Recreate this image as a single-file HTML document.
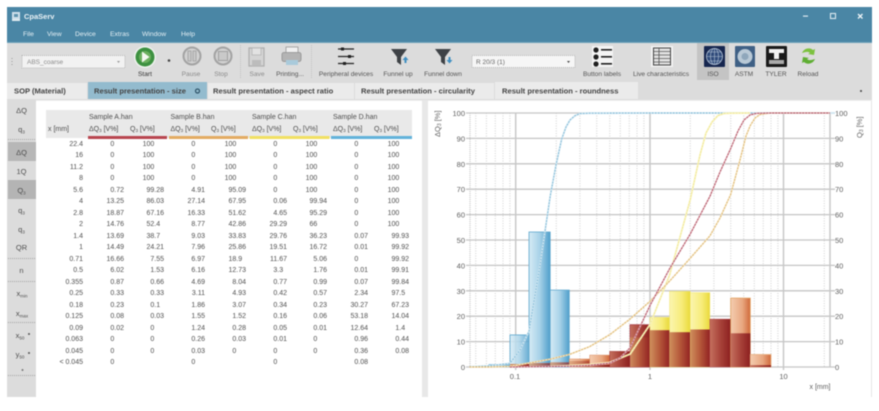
<!DOCTYPE html>
<html><head><meta charset="utf-8"><style>
html,body{margin:0;padding:0;background:#fff;width:879px;height:411px;overflow:hidden}
#w{position:relative;width:879px;height:411px;filter:blur(.55px);font-family:"Liberation Sans",sans-serif}
svg{position:absolute;left:0;top:0}
svg text{font-family:"Liberation Sans","DejaVu Sans",sans-serif}
#t{position:absolute;left:46px;top:138.7px;display:grid;grid-template-columns:37px 41px 40px 41px 41px 41px 40px 41px 41px;grid-auto-rows:11.53px;font-size:7px;line-height:11.53px;color:#4f4f4f;text-align:right}
#t u{visibility:hidden;text-decoration:none}
</style></head><body><div id="w">
<svg width="879" height="411" viewBox="0 0 879 411">
<defs>
<linearGradient id="gb"><stop offset="0" stop-color="#d6ebf5"/><stop offset=".5" stop-color="#a8d2e8"/><stop offset="1" stop-color="#4f9fcb"/></linearGradient>
<linearGradient id="gr"><stop offset="0" stop-color="#c4705e"/><stop offset=".5" stop-color="#a8433a"/><stop offset="1" stop-color="#8c1f1f"/></linearGradient>
<linearGradient id="go"><stop offset="0" stop-color="#f4cdb0"/><stop offset=".6" stop-color="#e8a780"/><stop offset="1" stop-color="#d0693a"/></linearGradient>
<linearGradient id="gy"><stop offset="0" stop-color="#fbf5b0"/><stop offset=".6" stop-color="#f7ec78"/><stop offset="1" stop-color="#e9d93a"/></linearGradient>
<linearGradient id="gm"><stop offset="0" stop-color="#cf8f5c"/><stop offset=".5" stop-color="#b5583a"/><stop offset="1" stop-color="#922222"/></linearGradient>
</defs>

<!-- title bar -->
<rect x="7" y="7" width="865" height="36" fill="#4a86a5"/>
<rect x="7" y="42" width="865" height="1" fill="#6ea3bb"/>
<rect x="12" y="12" width="8" height="7" fill="#cfe0ea"/><rect x="14" y="14" width="4" height="3" fill="#5f93ad"/><rect x="12" y="19" width="8" height="2" fill="#dfeaf0"/>
<text x="24" y="19" font-size="7.5" font-weight="bold" fill="#eaf2f6">CpaServ</text>
<g font-size="6.8" fill="#e4eff4">
<text x="23" y="36">File</text><text x="47" y="36">View</text><text x="75" y="36">Device</text><text x="110" y="36">Extras</text><text x="142" y="36">Window</text><text x="181" y="36">Help</text>
</g>
<rect x="803" y="15.5" width="5" height="1.2" fill="#dce9f0"/>
<rect x="830.5" y="13.5" width="5" height="5" fill="none" stroke="#dce9f0" stroke-width="1.1"/>
<path d="M858 14l4.5 4.5M862.500 14L858 18.500" stroke="#eef5f8" stroke-width="1.300"/>

<!-- toolbar -->
<rect x="7" y="43" width="865" height="39" fill="#dcdcdc"/>
<path d="M12 58v1M12 61v1M12 64v1" stroke="#999" stroke-width="1"/>
<rect x="22" y="55.500" width="103" height="12.500" fill="#f2f2f2" stroke="#aaa" stroke-dasharray="1 1" stroke-width=".8"/>
<text x="27" y="64" font-size="6.500" fill="#8a8a8a">ABS_coarse</text>
<path d="M117 61h3l-1.500 2z" fill="#999"/>
<circle cx="145" cy="57" r="11" fill="#eef3ee"/><circle cx="145" cy="57" r="9.500" fill="#3d9140"/><circle cx="145" cy="57" r="6" fill="#6cb05f"/><path d="M142 51.500l7.500 5.500-7.500 5.500z" fill="#f4f8f1"/>
<circle cx="169" cy="60.500" r="1.300" fill="#444"/>
<circle cx="192" cy="56" r="8.500" fill="#d2d2d2" stroke="#a3a3a3" stroke-width="2"/><rect x="188" y="51" width="3" height="10" fill="#c9c9c9" stroke="#a0a0a0" stroke-width=".8"/><rect x="193" y="51" width="3" height="10" fill="#c9c9c9" stroke="#a0a0a0" stroke-width=".8"/>
<circle cx="223" cy="56" r="8.500" fill="#d2d2d2" stroke="#a3a3a3" stroke-width="2"/><rect x="218.500" y="51.500" width="9" height="9" fill="#c9c9c9" stroke="#a0a0a0" stroke-width="1"/>
<path d="M240.500 45v34" stroke="#c0c0c0" stroke-dasharray="1 1"/>
<path d="M249 48h15v18h-15z" fill="#d4d4d4" stroke="#aeaeae" stroke-width="1.200"/><rect x="252" y="48" width="9" height="7" fill="#e2e2e2" stroke="#b5b5b5" stroke-width=".8"/><rect x="252" y="60" width="9" height="6" fill="#bcbcbc"/>
<rect x="286" y="47" width="12" height="6" fill="#f0f0f0" stroke="#999" stroke-width=".8"/><rect x="282" y="52.500" width="19" height="9" rx="2" fill="#b4b4b4" stroke="#8f8f8f" stroke-width=".8"/><rect x="286" y="60" width="12" height="5" fill="#a9cadb"/>
<path d="M311.500 45v34" stroke="#c0c0c0" stroke-dasharray="1 1"/>
<g stroke="#222" stroke-width="1.300"><path d="M338 49h16M338 56.500h16M338 63.500h16"/></g>
<g fill="#222"><rect x="341" y="47.500" width="3" height="3"/><rect x="348" y="55" width="3" height="3"/><rect x="343" y="62" width="3" height="3"/></g>
<path d="M391 49h16l-6 8v8l-4-3v-5z" fill="#3e4246"/><path d="M405.500 56.500l3 3.500h-2v3h-2v-3h-2z" fill="#3f8fc2"/>
<path d="M435 49h16l-6 8v8l-4-3v-5z" fill="#3e4246"/><path d="M449.500 63.500l3-3.500h-2v-3h-2v3h-2z" fill="#3f8fc2"/>
<rect x="472" y="55.500" width="103" height="12" fill="#f6f6f6" stroke="#aaa" stroke-dasharray="1 1" stroke-width=".8"/>
<text x="476" y="64" font-size="6.500" fill="#666">R 20/3 (1)</text>
<path d="M567 61h3l-1.500 2z" fill="#444"/>
<rect x="592" y="46" width="21" height="21" fill="#f4f4f4"/>
<g fill="#1f1f1f"><circle cx="596" cy="50" r="2.600"/><circle cx="596" cy="57" r="2.600"/><circle cx="596" cy="64" r="2.600"/><rect x="601" y="49" width="11" height="1.600"/><rect x="601" y="56" width="11" height="1.600"/><rect x="601" y="63" width="11" height="1.600"/></g>
<rect x="651" y="46" width="22" height="21" fill="#f2f2f2"/>
<rect x="653.500" y="48" width="17" height="17" fill="#e2e2e2" stroke="#444" stroke-width="1"/>
<path d="M654 51.500h16M654 55h16M654 58.500h16M654 62h16M659 48v17" stroke="#555" stroke-width=".8"/>
<rect x="697" y="43" width="32" height="37" fill="#c4c4c4"/>
<rect x="704" y="46" width="21" height="21" rx="1" fill="#16264f"/>
<circle cx="714.500" cy="56.500" r="8" fill="#2f4a7a" stroke="#b7c6d8" stroke-width=".8"/>
<path d="M706.500 56.500h16M714.500 48.500v16M708 52h13M708 61h13" stroke="#b7c6d8" stroke-width=".6"/><ellipse cx="714.500" cy="56.500" rx="4" ry="8" fill="none" stroke="#b7c6d8" stroke-width=".6"/>
<rect x="735" y="46" width="20" height="21" rx="1" fill="#3f6085"/>
<circle cx="745" cy="56.500" r="7.500" fill="#b9c9d6"/><circle cx="745" cy="56.500" r="3.500" fill="#8fa7bb"/>
<rect x="766" y="46" width="21" height="21" rx="1" fill="#1a1a1a"/>
<path d="M769 49h15v4h-5v6h-5v-6h-5z" fill="#f2f2f2"/><rect x="769" y="60" width="15" height="4" fill="#aaa"/>
<path d="M802 53c2-5 8-6 11-3l2-1-1 6-6-1 2-1c-2-2-5-1-8 0z" fill="#7cc23f"/>
<path d="M815 59c-2 5-8 6-11 3l-2 1 1-6 6 1-2 1c2 2 5 1 8 0z" fill="#5fae33"/>
<g font-size="6.600" fill="#6f6f6f" text-anchor="middle">
<text x="145" y="76" fill="#333">Start</text><text x="191" y="76" fill="#8a8a8a">Pause</text><text x="221" y="76" fill="#8a8a8a">Stop</text><text x="257" y="76" fill="#8a8a8a">Save</text><text x="290" y="76" fill="#555">Printing...</text>
<text x="346" y="76" fill="#555">Peripheral devices</text><text x="398" y="76" fill="#555">Funnel up</text><text x="443" y="76" fill="#555">Funnel down</text><text x="602" y="76" fill="#555">Button labels</text><text x="661" y="76" fill="#555">Live characteristics</text><text x="713" y="76" fill="#555">ISO</text><text x="744" y="76" fill="#555">ASTM</text><text x="776" y="76" fill="#555">TYLER</text><text x="808" y="76" fill="#555">Reload</text>
</g>

<!-- tabs -->
<rect x="7" y="82" width="865" height="18" fill="#dcdcdc"/>
<rect x="7" y="83" width="80" height="16" fill="#ebebeb"/>
<rect x="88" y="82" width="119" height="17" fill="#93bbce"/>
<rect x="208" y="83" width="146" height="16" fill="#ebebeb"/>
<rect x="355" y="83" width="139" height="16" fill="#ebebeb"/>
<rect x="495" y="82" width="143" height="17" fill="#ebebeb"/>
<g font-size="7.6" font-weight="bold" fill="#444">
<text x="14" y="93.500">SOP (Material)</text><text x="94" y="93.500">Result presentation - size</text><text x="213" y="93.500">Result presentation - aspect ratio</text><text x="361" y="93.500">Result presentation - circularity</text><text x="502" y="93.500">Result presentation - roundness</text>
</g>
<circle cx="197.500" cy="91" r="2" fill="none" stroke="#2e5368" stroke-width="1.200"/>
<circle cx="861" cy="91" r="1" fill="#444"/>

<!-- content -->
<rect x="36" y="100" width="836" height="297" fill="#fff"/>
<rect x="871" y="100" width="1" height="297" fill="#e6e6e6"/>
<rect x="36" y="100" width="386" height="1" fill="#eee"/>
<rect x="428" y="100" width="444" height="1" fill="#eee"/>
<rect x="422" y="100" width="6" height="297" fill="#e8e8e8"/>

<!-- sidebar -->
<rect x="7" y="100" width="29" height="297" fill="#dcdcdc"/>
<rect x="8" y="142" width="28" height="19" fill="#b7b7b7"/>
<rect x="8" y="180" width="28" height="19" fill="#b4b4b4"/>
<path d="M8 139.500h28M8 258.500h28M8 281.500h28M8 322.500h28M8 375.500h28" stroke="#a5a5a5" stroke-dasharray="1 1"/>
<g font-size="7.500" fill="#4e4e4e" text-anchor="middle">
<text x="21.500" y="113">ΔQ</text><text x="21.500" y="132">q<tspan font-size="4.500" dy="1.500">3</tspan></text><text x="21.500" y="155">ΔQ</text><text x="21.500" y="174">1Q</text><text x="21.500" y="193">Q<tspan font-size="4.500" dy="1.500">3</tspan></text><text x="21.500" y="213">q<tspan font-size="4.500" dy="1.500">3</tspan></text><text x="21.500" y="232">q<tspan font-size="4.500" dy="1.500">3</tspan></text><text x="21.500" y="250">QR</text><text x="21.500" y="273">n</text>
<text x="22" y="296">x<tspan font-size="4.500" dy="1.500">min</tspan></text><text x="22" y="316">x<tspan font-size="4.500" dy="1.500">max</tspan></text><text x="20" y="338">x<tspan font-size="4.500" dy="1.500">50</tspan></text><text x="20" y="357">y<tspan font-size="4.500" dy="1.500">50</tspan></text>
</g>
<circle cx="29" cy="334" r="1" fill="#555"/><circle cx="29" cy="353" r="1" fill="#555"/><circle cx="22.500" cy="370" r="1" fill="#777"/>

<!-- table head -->
<rect x="46" y="110" width="366" height="28" fill="#e9e9e9"/>
<rect x="88" y="136" width="79" height="3" fill="#b8454f"/>
<rect x="169" y="136" width="79" height="3" fill="#e3ab62"/>
<rect x="249.500" y="136" width="80" height="3" fill="#f1e062"/>
<rect x="331" y="136" width="81" height="3" fill="#62b2da"/>
<g font-size="7" fill="#4e4e4e">
<text x="48" y="131">x [mm]</text>
<text x="89" y="119">Sample A.han</text><text x="170.500" y="119">Sample B.han</text><text x="252" y="119">Sample C.han</text><text x="333" y="119">Sample D.han</text>
<text x="89" y="131">ΔQ<tspan font-size="4.500" dy="1">3</tspan><tspan dy="-1"> [V%]</tspan></text><text x="130" y="131">Q<tspan font-size="4.500" dy="1">3</tspan><tspan dy="-1"> [V%]</tspan></text>
<text x="170.500" y="131">ΔQ<tspan font-size="4.500" dy="1">3</tspan><tspan dy="-1"> [V%]</tspan></text><text x="211" y="131">Q<tspan font-size="4.500" dy="1">3</tspan><tspan dy="-1"> [V%]</tspan></text>
<text x="252" y="131">ΔQ<tspan font-size="4.500" dy="1">3</tspan><tspan dy="-1"> [V%]</tspan></text><text x="293" y="131">Q<tspan font-size="4.500" dy="1">3</tspan><tspan dy="-1"> [V%]</tspan></text>
<text x="333" y="131">ΔQ<tspan font-size="4.500" dy="1">3</tspan><tspan dy="-1"> [V%]</tspan></text><text x="374" y="131">Q<tspan font-size="4.500" dy="1">3</tspan><tspan dy="-1"> [V%]</tspan></text>
</g>

<!-- chart grid -->
<g stroke="#d2d2d2" stroke-width="1" stroke-dasharray="1 1.500" fill="none">
<path d="M475.700 113V367M486.400 113V367M495.300 113V367M503 113V367M509.900 113V367M556.300 113V367M579.900 113V367M596.700 113V367M609.700 113V367M620.300 113V367M629.200 113V367M637 113V367M643.900 113V367M690.300 113V367M713.900 113V367M730.700 113V367M743.700 113V367M754.300 113V367M763.200 113V367M771 113V367M777.900 113V367M824.300 113V367"/>
</g>
<path d="M470 113V367" stroke="#c8c8c8" stroke-width="1.200" stroke-dasharray="1 1"/>
<path d="M515.700 113V370M650 113V370M783.500 113V370M830 113V367" stroke="#c9c9c9" stroke-width="1.500"/>
<path d="M466 113H835M466 138.400H835M466 163.800H835M466 189.200H835M466 214.600H835M466 240H835M466 265.400H835M466 290.800H835M466 316.200H835M466 341.600H835M466 367H835" stroke="#c6c6c6" stroke-width="1.300"/>
<g font-size="7.500" fill="#5e5e5e" text-anchor="end">
<text x="465" y="116">100</text><text x="465" y="141.400">90</text><text x="465" y="166.800">80</text><text x="465" y="192.200">70</text><text x="465" y="217.600">60</text><text x="465" y="243">50</text><text x="465" y="268.400">40</text><text x="465" y="293.800">30</text><text x="465" y="319.200">20</text><text x="465" y="344.600">10</text><text x="465" y="370">0</text>
</g>
<g font-size="7.500" fill="#5e5e5e">
<text x="835" y="116">100</text><text x="835" y="141.400">90</text><text x="835" y="166.800">80</text><text x="835" y="192.200">70</text><text x="835" y="217.600">60</text><text x="835" y="243">50</text><text x="835" y="268.400">40</text><text x="835" y="293.800">30</text><text x="835" y="319.200">20</text><text x="835" y="344.600">10</text><text x="835" y="370">0</text>
</g>
<g font-size="7.500" fill="#5e5e5e" text-anchor="middle"><text x="515" y="379">0.1</text><text x="650" y="379">1</text><text x="783.500" y="379">10</text><text x="820" y="389" font-size="7">x [mm]</text></g>
<text transform="translate(440,137) rotate(-90)" font-size="7.500" fill="#5e5e5e">ΔQ<tspan font-size="5" dy="1">3</tspan><tspan dy="-1"> [%]</tspan></text>
<text transform="translate(862,138) rotate(-90)" font-size="7.500" fill="#5e5e5e">Q<tspan font-size="5" dy="1">3</tspan><tspan dy="-1"> [%]</tspan></text>

<!-- bars -->
<g stroke-width=".8">
<rect x="489" y="364.600" width="21" height="2.400" fill="url(#gb)" stroke="#6fb0d4"/>
<rect x="510" y="334.900" width="19" height="32.100" fill="url(#gb)" stroke="#5ea7ce" fill-opacity=".85"/>
<rect x="529" y="232" width="21.200" height="135" fill="url(#gb)" stroke="#5ea7ce"/>
<rect x="550.200" y="290.100" width="19.100" height="76.900" fill="url(#gb)" stroke="#5ea7ce"/>
<rect x="510" y="364" width="19" height="3" fill="url(#gm)"/>
<rect x="529" y="363" width="21" height="4" fill="url(#gm)" fill-opacity=".7"/>
<rect x="550" y="362.300" width="19" height="4.700" fill="url(#gm)" fill-opacity=".7"/>
<rect x="569.300" y="359" width="20.400" height="8" fill="url(#go)" stroke="#d78a60" stroke-width=".5"/>
<rect x="569.300" y="361" width="20.400" height="6" fill="url(#gm)" fill-opacity=".55"/>
<rect x="589.700" y="355.100" width="20" height="11.900" fill="url(#go)" stroke="#d78a60" stroke-width=".5"/>
<rect x="589.700" y="364.800" width="20" height="2.200" fill="url(#gr)"/>
<rect x="609.700" y="351.400" width="20.400" height="15.600" fill="url(#gr)" stroke="#a03030" stroke-width=".5"/>
<rect x="630.100" y="324.700" width="19.900" height="42.300" fill="url(#gr)" stroke="#a83c46"/>
<rect x="630.100" y="337.400" width="19.900" height="29.600" fill="url(#gm)" fill-opacity=".85"/>
<rect x="650" y="317.400" width="19.600" height="49.600" fill="url(#gy)" stroke="#efe36a" stroke-width=".5"/>
<rect x="650" y="330.200" width="19.600" height="36.800" fill="url(#gm)"/>
<rect x="669.600" y="291.400" width="20.700" height="75.600" fill="url(#gy)" stroke="#efe36a" stroke-width=".5"/>
<rect x="669.600" y="332.200" width="20.700" height="34.800" fill="url(#gm)"/>
<rect x="690.300" y="292.600" width="19.600" height="74.400" fill="url(#gy)" stroke="#efe36a" stroke-width=".5"/>
<rect x="690.300" y="329.500" width="19.600" height="37.500" fill="url(#gm)"/>
<rect x="709.900" y="319.100" width="20.800" height="47.900" fill="url(#gr)" stroke="#a83c46" stroke-width=".5"/>
<rect x="709.900" y="325.500" width="20.800" height="41.500" fill="url(#gr)" fill-opacity=".7"/>
<rect x="730.700" y="298.100" width="19.600" height="68.900" fill="url(#go)" stroke="#e0a060"/>
<rect x="730.700" y="333.300" width="19.600" height="33.700" fill="url(#gr)"/>
<rect x="750.300" y="354.500" width="20.700" height="12.500" fill="url(#go)" stroke="#e6b080"/>
<rect x="750.300" y="365.200" width="20.700" height="1.800" fill="url(#gr)"/>
</g>

<!-- curves -->
<g fill="none" stroke-linejoin="round" stroke-linecap="butt">
<polyline points="469.500,366.800 489,365.900 509.900,363.400 520,350 529,331.300 540,265 550.200,196.200 556,165 561.700,139 566,127 570,120 575,115.700 580,113.600 589.700,113.200 650,113 835,113" stroke="#cfe6f1" stroke-width="1.800"/>
<polyline points="469.500,366.800 489,365.900 509.900,363.400 520,350 529,331.300 540,265 550.200,196.200 556,165 561.700,139 566,127 570,120 575,115.700 580,113.600 589.700,113.200 650,113 830,113" stroke="#76b3d3" stroke-width=".9" stroke-dasharray="1.500 1.500"/>
<polyline points="550,366.400 569.300,365.600 589.700,364.500 609.700,362.500 630.100,354.100 650,324.500 669.600,275 690.300,199.400 700,155 706,133 712,122 718,115.500 724,113.500 730.700,113.200 750,113" stroke="#f8f3bf" stroke-width="1.800"/>
<polyline points="550,366.400 569.300,365.600 589.700,364.500 609.700,362.500 630.100,354.100 650,324.500 669.600,275 690.300,199.400 700,155 706,133 712,122 718,115.500 724,113.500 730.700,113.200 750,113" stroke="#efe58a" stroke-width=".8" stroke-dasharray="1.500 1.500"/>
<polyline points="469.500,367 489,367 509.900,366.300 529,363.100 550.200,359.200 569.300,354.500 589.700,346.600 609.700,334.700 630.100,319 650,301.300 669.600,281.100 690.300,258.100 709.900,235.900 720,218 730.700,194.400 740,160 746,136 750.300,125.500 755,118 760,114.500 771,113 830,113" stroke="#f3e3bd" stroke-width="1.600"/>
<polyline points="469.500,367 489,367 509.900,366.300 529,363.100 550.200,359.200 569.300,354.500 589.700,346.600 609.700,334.700 630.100,319 650,301.300 669.600,281.100 690.300,258.100 709.900,235.900 720,218 730.700,194.400 740,160 746,136 750.300,125.500 755,118 760,114.500 771,113 830,113" stroke="#dcae66" stroke-width=".9" stroke-dasharray="1.500 1.500"/>
<polyline points="509.900,367 569.300,366.200 589.700,365.300 609.700,363.100 620,358 630.100,347.800 650,305.500 669.600,268.700 690.300,233.900 709.900,196.400 720,172 730.700,148.500 738,131 744,120 750.300,114.800 757,113.300 771,113 830,113" stroke="#e6c0c6" stroke-width="1.600"/>
<polyline points="509.900,367 569.300,366.200 589.700,365.300 609.700,363.100 620,358 630.100,347.800 650,305.500 669.600,268.700 690.300,233.900 709.900,196.400 720,172 730.700,148.500 738,131 744,120 750.300,114.800 757,113.300 771,113 830,113" stroke="#b04c5e" stroke-width=".9" stroke-dasharray="2 1"/>
</g>
</svg>

<div id="t">
<span>22.4</span><span>0<u>.00</u></span><span>100<u>.00</u></span><span>0<u>.00</u></span><span>100<u>.00</u></span><span>0<u>.00</u></span><span>100<u>.00</u></span><span>0<u>.00</u></span><span>100<u>.00</u></span>
<span>16</span><span>0<u>.00</u></span><span>100<u>.00</u></span><span>0<u>.00</u></span><span>100<u>.00</u></span><span>0<u>.00</u></span><span>100<u>.00</u></span><span>0<u>.00</u></span><span>100<u>.00</u></span>
<span>11.2</span><span>0<u>.00</u></span><span>100<u>.00</u></span><span>0<u>.00</u></span><span>100<u>.00</u></span><span>0<u>.00</u></span><span>100<u>.00</u></span><span>0<u>.00</u></span><span>100<u>.00</u></span>
<span>8</span><span>0<u>.00</u></span><span>100<u>.00</u></span><span>0<u>.00</u></span><span>100<u>.00</u></span><span>0<u>.00</u></span><span>100<u>.00</u></span><span>0<u>.00</u></span><span>100<u>.00</u></span>
<span>5.6</span><span>0.72</span><span>99.28</span><span>4.91</span><span>95.09</span><span>0<u>.00</u></span><span>100<u>.00</u></span><span>0<u>.00</u></span><span>100<u>.00</u></span>
<span>4</span><span>13.25</span><span>86.03</span><span>27.14</span><span>67.95</span><span>0.06</span><span>99.94</span><span>0<u>.00</u></span><span>100<u>.00</u></span>
<span>2.8</span><span>18.87</span><span>67.16</span><span>16.33</span><span>51.62</span><span>4.65</span><span>95.29</span><span>0<u>.00</u></span><span>100<u>.00</u></span>
<span>2</span><span>14.76</span><span>52.4<u>0</u></span><span>8.77</span><span>42.86</span><span>29.29</span><span>66<u>.00</u></span><span>0<u>.00</u></span><span>100<u>.00</u></span>
<span>1.4</span><span>13.69</span><span>38.7<u>0</u></span><span>9.03</span><span>33.83</span><span>29.76</span><span>36.23</span><span>0.07</span><span>99.93</span>
<span>1</span><span>14.49</span><span>24.21</span><span>7.96</span><span>25.86</span><span>19.51</span><span>16.72</span><span>0.01</span><span>99.92</span>
<span>0.71</span><span>16.66</span><span>7.55</span><span>6.97</span><span>18.9<u>0</u></span><span>11.67</span><span>5.06</span><span>0<u>.00</u></span><span>99.92</span>
<span>0.5</span><span>6.02</span><span>1.53</span><span>6.16</span><span>12.73</span><span>3.3<u>0</u></span><span>1.76</span><span>0.01</span><span>99.91</span>
<span>0.355</span><span>0.87</span><span>0.66</span><span>4.69</span><span>8.04</span><span>0.77</span><span>0.99</span><span>0.07</span><span>99.84</span>
<span>0.25</span><span>0.33</span><span>0.33</span><span>3.11</span><span>4.93</span><span>0.42</span><span>0.57</span><span>2.34</span><span>97.5<u>0</u></span>
<span>0.18</span><span>0.23</span><span>0.1<u>0</u></span><span>1.86</span><span>3.07</span><span>0.34</span><span>0.23</span><span>30.27</span><span>67.23</span>
<span>0.125</span><span>0.08</span><span>0.03</span><span>1.55</span><span>1.52</span><span>0.16</span><span>0.06</span><span>53.18</span><span>14.04</span>
<span>0.09</span><span>0.02</span><span>0<u>.00</u></span><span>1.24</span><span>0.28</span><span>0.05</span><span>0.01</span><span>12.64</span><span>1.4<u>0</u></span>
<span>0.063</span><span>0<u>.00</u></span><span>0<u>.00</u></span><span>0.26</span><span>0.03</span><span>0.01</span><span>0<u>.00</u></span><span>0.96</span><span>0.44</span>
<span>0.045</span><span>0<u>.00</u></span><span>0<u>.00</u></span><span>0.03</span><span>0<u>.00</u></span><span>0<u>.00</u></span><span>0<u>.00</u></span><span>0.36</span><span>0.08</span>
<span>&lt; 0.045</span><span>0<u>.00</u></span><span></span><span>0<u>.00</u></span><span></span><span>0<u>.00</u></span><span></span><span>0.08</span><span></span>
</div>
</div></body></html>
